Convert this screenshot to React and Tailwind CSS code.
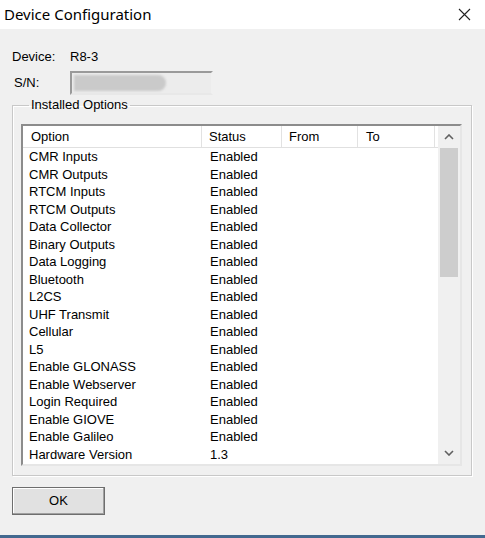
import React from 'react';

const OPTIONS = [
  ['CMR Inputs', 'Enabled'],
  ['CMR Outputs', 'Enabled'],
  ['RTCM Inputs', 'Enabled'],
  ['RTCM Outputs', 'Enabled'],
  ['Data Collector', 'Enabled'],
  ['Binary Outputs', 'Enabled'],
  ['Data Logging', 'Enabled'],
  ['Bluetooth', 'Enabled'],
  ['L2CS', 'Enabled'],
  ['UHF Transmit', 'Enabled'],
  ['Cellular', 'Enabled'],
  ['L5', 'Enabled'],
  ['Enable GLONASS', 'Enabled'],
  ['Enable Webserver', 'Enabled'],
  ['Login Required', 'Enabled'],
  ['Enable GIOVE', 'Enabled'],
  ['Enable Galileo', 'Enabled'],
  ['Hardware Version', '1.3'],
];

const Chevron = ({ up }) => (
  <svg width="10" height="6" viewBox="0 0 10 6">
    <polyline
      points={up ? '1,5 5,1 9,5' : '1,1 5,5 9,1'}
      fill="none"
      stroke="#606060"
      strokeWidth="1.6"
    />
  </svg>
);

export default function App() {
  return (
    <div className="w-[485px] h-[538px] flex flex-col bg-[#f0f0f0] text-black font-['Liberation_Sans',sans-serif] text-[13px] overflow-hidden">
      {/* title bar */}
      <div className="h-[29px] bg-white flex items-center justify-between pl-[4px] pr-[14px]">
        <span className="text-[15px] font-['Noto_Sans',sans-serif]">Device Configuration</span>
        <svg width="13" height="13" viewBox="0 0 13 13">
          <path d="M1 1 L12 12 M12 1 L1 12" stroke="#222" strokeWidth="1.1" />
        </svg>
      </div>

      <div className="flex-1 px-[12px] pt-[19px]">
        <div className="flex items-center h-[18px]">
          <span className="w-[58px]">Device:</span>
          <span>R8-3</span>
        </div>
        <div className="flex items-center mt-[5px] h-[24px]">
          <span className="w-[58px] pl-[2px]">S/N:</span>
          <div className="w-[143px] h-[24px] border-2 border-t-[#9a9a9a] border-l-[#9a9a9a] border-r-[#f0f0f0] border-b-[#e8e8e8] bg-[#ececec] flex items-center px-[2px]">
            <div className="w-[92px] h-[16px] rounded-r-[8px] bg-[#cacaca] blur-[1px]" />
          </div>
        </div>

        <fieldset className="mt-[2px] w-[460px] h-[379px] border border-[#c8c8c8] shadow-[inset_1px_1px_0_#ffffff,1px_1px_0_#ffffff] px-[8px] pt-[11px]">
          <legend className="ml-[8px] px-[2px] leading-[16px]">Installed Options</legend>
          <div className="w-[441px] h-[342px] border-2 border-t-[#8c8c8c] border-l-[#8c8c8c] border-r-[#e6e6e6] border-b-[#e6e6e6] bg-white flex">
            <div className="flex-1 flex flex-col">
              <div className="h-[22px] flex border-b border-[#e0e0e0] shrink-0">
                <div className="w-[179px] pl-[8px] flex items-center border-r border-[#e2e2e2]">Option</div>
                <div className="w-[80px] pl-[7px] flex items-center border-r border-[#e2e2e2]">Status</div>
                <div className="w-[76px] pl-[7px] flex items-center border-r border-[#e2e2e2]">From</div>
                <div className="w-[77px] pl-[8px] flex items-center border-r border-[#e2e2e2]">To</div>
              </div>
              <div>
                {OPTIONS.map(([name, status]) => (
                  <div key={name} className="h-[17.5px] flex items-center">
                    <span className="w-[179px] pl-[6px]">{name}</span>
                    <span className="pl-[8px]">{status}</span>
                  </div>
                ))}
              </div>
            </div>
            <div className="w-[22px] bg-[#f0f0f0] flex flex-col">
              <div className="h-[22px] flex items-center justify-center">
                <Chevron up />
              </div>
              <div className="flex-1 px-[2px]">
                <div className="h-[129px] bg-[#cdcdcd]" />
              </div>
              <div className="h-[22px] flex items-center justify-center">
                <Chevron />
              </div>
            </div>
          </div>
        </fieldset>

        <button className="mt-[11px] w-[93px] h-[28px] bg-[#e1e1e1] border border-[#6e6e6e] shadow-[inset_-1px_-1px_0_#a0a0a0,inset_1px_1px_0_#ffffff] flex items-center justify-center">
          OK
        </button>
      </div>
      <div className="h-[3px] bg-[#43698f]" />
    </div>
  );
}
